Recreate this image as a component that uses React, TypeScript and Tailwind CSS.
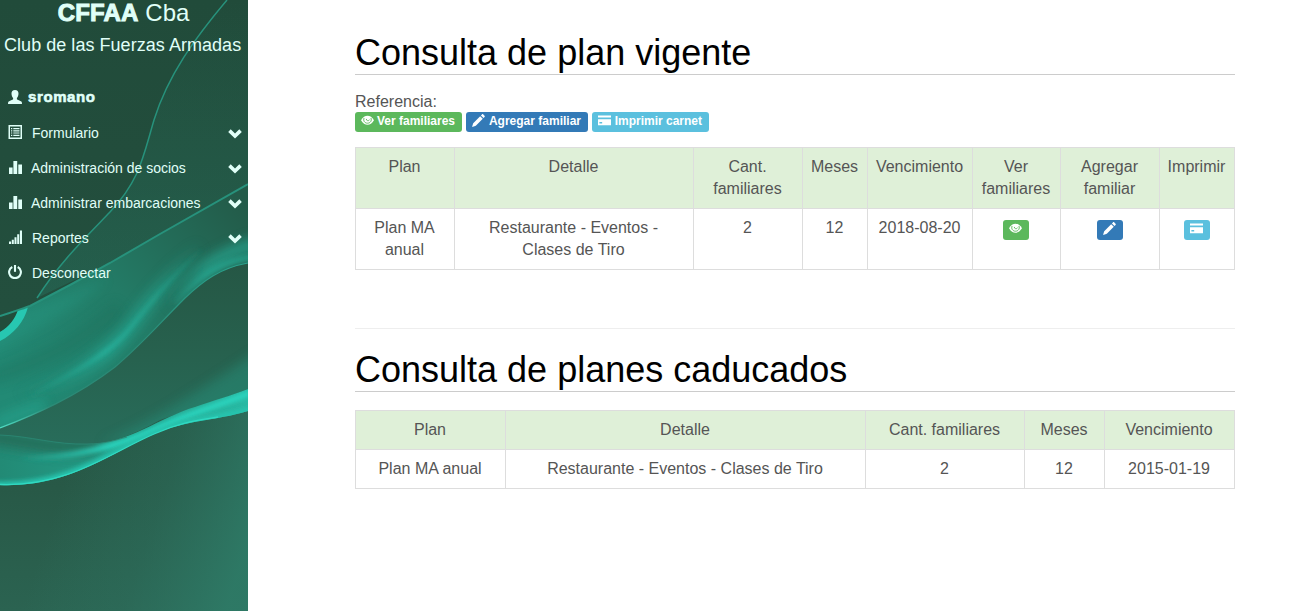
import type { ReactNode } from "react";

type IconName = "user" | "list" | "stats" | "signal" | "off" | "chevron" | "eye" | "pencil" | "card";

function Icon({ name, className }: { name: IconName; className: string }) {
  const shapes: Record<IconName, ReactNode> = {
    user: (
      <path d="M7 0C4.600 0 3.400 1.600 3.500 3.800c.1 1.900.7 3.300 1.600 4.200v1.300c-.3.700-3.400 1.500-4.500 2.300C.1 12.100 0 13 0 14h14c0-1-.1-1.900-.6-2.400-1.100-.8-4.200-1.600-4.500-2.300V8c.9-.9 1.500-2.300 1.600-4.200C10.600 1.600 9.400 0 7 0z" />
    ),
    list: (
      <path
        fillRule="evenodd"
        d="M.5 0h13.500v14H.5zM2 1.500v11h10.500v-11zM3 3h1.300v1.200H3zm2.300 0H11.500v1.200H5.300zM3 5.200h1.300v1.200H3zm2.300 0H11.500v1.200H5.300zM3 7.400h1.300v1.200H3zm2.300 0H11.500v1.200H5.300zM3 9.800h1.300v1.200H3zm2.300 0H11.500v1.200H5.300z"
      />
    ),
    stats: <path d="M1 7.500h3.600V14H1zM5.400 1h3.800v13H5.400zM10.300 4.500H14V14h-3.700z" />,
    signal: <path d="M1 11.500h2.100V14H1zM3.800 9.700h2V14h-2zM6.500 7.300h2V14h-2zM9.200 4.300h2V14h-2zM11.900.5H14V14h-2.100z" />,
    off: (
      <g fill="none" stroke="currentColor" strokeWidth="2.100">
        <path d="M4.300 2a5.900 5.900 0 1 0 5.400 0" />
        <path d="M7 0v6.800" />
      </g>
    ),
    chevron: <path d="M.2 5.900 2.700 3.200 7 7.500l4.300-4.300 2.500 2.700L7 12.500z" />,
    eye: (
      <>
        <path d="M0 6.700C2 3.300 4.300 1.800 7 1.800s5 1.500 7 4.900c-2 3.300-4.300 4.800-7 4.800S2 10 0 6.700z" />
        <path
          d="M3.300 4.300C2.100 7.500 4.200 9.900 7 9.900s4.900-2.400 3.700-5.600M5.700 5.300c0 2.200 2.600 2.500 3.500.9"
          fill="none"
          className="stroke-[#5cb85c]"
          strokeWidth="1"
        />
      </>
    ),
    pencil: <path d="M0 14 1.300 9.900 8.800 2.400l2.800 2.800-7.500 7.500zM9.600 1.600l1.100-1.100c.5-.5 1-.5 1.500 0l1.300 1.300c.5.5.5 1 0 1.500l-1.100 1.100z" />,
    card: <path fillRule="evenodd" d="M0 1.500h14v2.400H0zM0 5.600h14V12H0zM1.500 8.600v1.500h3V8.600z" />,
  };
  return (
    <svg viewBox="0 0 14 14" fill="currentColor" className={className} aria-hidden="true">
      {shapes[name]}
    </svg>
  );
}

function Waves() {
  return (
    <svg viewBox="0 0 248 611" preserveAspectRatio="none" className="absolute inset-0 h-full w-full" aria-hidden="true">
      <defs>
        <linearGradient id="base" x1="0" y1="0" x2="0" y2="1">
          <stop offset="0" stopColor="#214b3a" />
          <stop offset=".5" stopColor="#234f3e" />
          <stop offset=".8" stopColor="#285947" />
          <stop offset="1" stopColor="#2b6351" />
        </linearGradient>
        <linearGradient id="glow" gradientUnits="userSpaceOnUse" x1="80" y1="430" x2="265" y2="490">
          <stop offset="0" stopColor="#2d7c68" stopOpacity="0" />
          <stop offset=".5" stopColor="#2d7563" stopOpacity=".35" />
          <stop offset="1" stopColor="#2e7b67" stopOpacity=".9" />
        </linearGradient>
        <linearGradient id="veil" x1="0" y1="0" x2="0" y2="1">
          <stop offset="0" stopColor="#267762" stopOpacity="0" />
          <stop offset="1" stopColor="#26705d" stopOpacity=".8" />
        </linearGradient>
        <linearGradient id="ribbon" gradientUnits="userSpaceOnUse" x1="10" y1="400" x2="240" y2="200">
          <stop offset="0" stopColor="#228a75" />
          <stop offset=".5" stopColor="#237b66" />
          <stop offset="1" stopColor="#235b49" />
        </linearGradient>
        <linearGradient id="middle" x1="0" y1="0" x2="0" y2="1">
          <stop offset="0" stopColor="#255644" />
          <stop offset=".5" stopColor="#27614e" />
          <stop offset="1" stopColor="#286d5b" />
        </linearGradient>
        <linearGradient id="lower" x1="0" y1="0" x2="1" y2="0">
          <stop offset="0" stopColor="#228a75" />
          <stop offset=".45" stopColor="#249d87" />
          <stop offset="1" stopColor="#28b9a3" />
        </linearGradient>
        <linearGradient id="crest" gradientUnits="userSpaceOnUse" x1="20" y1="0" x2="248" y2="0">
          <stop offset="0" stopColor="#2bd4be" stopOpacity="0" />
          <stop offset=".4" stopColor="#2bd4be" />
          <stop offset="1" stopColor="#2bd4be" />
        </linearGradient>
        <linearGradient id="fadeRight" gradientUnits="userSpaceOnUse" x1="20" y1="400" x2="205" y2="245">
          <stop offset="0" stopColor="#24a58f" stopOpacity="0" />
          <stop offset=".4" stopColor="#28b7a2" />
          <stop offset=".7" stopColor="#25a58f" />
          <stop offset="1" stopColor="#25a58f" stopOpacity="0" />
        </linearGradient>
        <linearGradient id="shoulder" gradientUnits="userSpaceOnUse" x1="165" y1="0" x2="248" y2="0">
          <stop offset="0" stopColor="#27ad97" stopOpacity="0" />
          <stop offset=".5" stopColor="#27ad97" />
          <stop offset="1" stopColor="#27ad97" />
        </linearGradient>
        <linearGradient id="edge" gradientUnits="userSpaceOnUse" x1="0" y1="0" x2="248" y2="0">
          <stop offset="0" stopColor="#50ddc5" />
          <stop offset=".2" stopColor="#2b8b77" />
          <stop offset=".5" stopColor="#2a8975" />
          <stop offset="1" stopColor="#29a58f" />
        </linearGradient>
        <filter id="blur2" filterUnits="userSpaceOnUse" x="-40" y="150" width="340" height="400">
          <feGaussianBlur stdDeviation="2" />
        </filter>
        <filter id="blur6" filterUnits="userSpaceOnUse" x="-40" y="150" width="340" height="400">
          <feGaussianBlur stdDeviation="6" />
        </filter>
        <clipPath id="ribbonClip">
          <path d="M0 316C10 313 21 309 30 306L70 285L110 263L160 234L248 184V263C220 268 203 281 185 298C158 325 142 344 115 367C76 397 34 415 0 428z" />
        </clipPath>
        <clipPath id="middleClip">
          <path d="M0 428C34 415 76 397 115 367C142 344 158 325 185 298C203 281 220 268 248 263V389C215 402 195 407 160 420C129 437 110 444 87 444C56 445 30 436 0 435z" />
        </clipPath>
        <clipPath id="lowerClip">
          <path d="M0 435C30 436 56 445 87 444C129 444 160 417 195 407C215 400 230 396 248 389V411C215 421 185 420 154 434C110 453 68 488 0 485z" />
        </clipPath>
      </defs>
      <rect width="248" height="611" fill="url(#base)" />
      <rect y="410" width="248" height="201" fill="url(#glow)" />
      <path d="M227 0C195 38 168 75 154 120C143 157 140 180 110 212C85 238 60 262 37 298L110 263L248 184V0z" fill="url(#veil)" opacity=".6" />
      <g clipPath="url(#middleClip)">
        <rect y="255" width="248" height="195" fill="url(#middle)" />
        <path d="M100 443C145 425 190 397 260 350V400L160 440z" fill="#28947f" opacity=".45" filter="url(#blur6)" />
      </g>
      <g clipPath="url(#ribbonClip)">
        <rect y="180" width="248" height="250" fill="url(#ribbon)" />
        <path d="M-10 353C30 334 78 310 108 278L30 306L-10 320z" fill="#2bae98" opacity=".22" filter="url(#blur6)" />
        <path d="M-10 378C45 360 80 342 120 308" fill="none" stroke="#1f6d59" strokeWidth="16" opacity=".35" filter="url(#blur6)" />
        <path d="M0 402C68 387 109 355 132 325C151 299 168 277 205 242" fill="none" stroke="url(#fadeRight)" strokeWidth="14" opacity=".6" filter="url(#blur6)" />
        <path d="M30 396C82 369 114 350 131 327C151 302 168 280 202 249" fill="none" stroke="url(#fadeRight)" strokeWidth="3.500" opacity=".85" filter="url(#blur2)" />
        <path d="M165 307C190 280 211 255 260 243" fill="none" stroke="url(#shoulder)" strokeWidth="14" opacity=".7" filter="url(#blur6)" />
        <path d="M175 303C203 273 220 262 255 257" fill="none" stroke="url(#shoulder)" strokeWidth="7" opacity=".6" filter="url(#blur2)" />
        <path d="M-5 424L45 404" stroke="#26a892" strokeWidth="12" opacity=".6" filter="url(#blur6)" />
      </g>
      <path d="M0 316L18 310C16 318 10 326 0 332z" fill="#224d3b" />
      <path d="M18 310L28 307C24 322 14 334 0 341V332C9 327 15 319 18 310z" fill="#27c7b1" />
      <path d="M0 428C34 415 76 397 115 367C142 344 158 325 185 298C203 281 220 268 248 263" fill="none" stroke="url(#edge)" strokeWidth="1.200" />
      <g clipPath="url(#lowerClip)">
        <rect y="380" width="248" height="110" fill="url(#lower)" />
        <path d="M-10 436C40 445 70 450 100 445" fill="none" stroke="#266a57" strokeWidth="16" opacity=".9" filter="url(#blur6)" />
        <path d="M20 458C80 458 125 444 160 427C190 413 218 406 250 393" fill="none" stroke="url(#crest)" strokeWidth="6" filter="url(#blur2)" />
        <path d="M-5 485C68 488 110 453 154 434C185 420 205 421 250 411" fill="none" stroke="#28c5af" strokeWidth="7" filter="url(#blur2)" />
      </g>
      <path d="M0 435C30 436 56 445 87 444C105 444 116 440 127 437" fill="none" stroke="#2b8975" strokeWidth=".8" />
      <path d="M0 484.500C68 487 110 453 154 434C180 422 200 420 218 417" fill="none" stroke="#31d9c1" strokeWidth="1.300" />
      <g fill="none" stroke="#27927c">
        <path d="M227 0C195 38 168 75 154 120C143 157 140 180 110 212C85 238 60 262 37 298" strokeWidth="1.500" />
        <path d="M0 316C10 313 21 309 30 306L70 285L110 263L160 234L248 184" strokeWidth="2" />
      </g>
    </svg>
  );
}

const menu: { icon: IconName; label: string; sub: boolean; indent: string }[] = [
  { icon: "list", label: "Formulario", sub: true, indent: "ml-2.5" },
  { icon: "stats", label: "Administración de socios", sub: true, indent: "ml-[9px]" },
  { icon: "stats", label: "Administrar embarcaciones", sub: true, indent: "ml-[9px]" },
  { icon: "signal", label: "Reportes", sub: true, indent: "ml-2.5" },
  { icon: "off", label: "Desconectar", sub: false, indent: "ml-2.5" },
];

function Sidebar() {
  return (
    <aside className="relative w-[248px] shrink-0 overflow-hidden bg-[#234b3a] text-[#e0fff8]">
      <Waves />
      <div className="relative">
        <div className="flex h-[26px] items-center justify-center whitespace-pre pr-px text-2xl leading-7">
          <span className="font-bold tracking-[0.2px] [-webkit-text-stroke:1px_#e0fff8]">CFFAA</span>
          <span> Cba</span>
        </div>
        <div className="mt-[9px] h-5 whitespace-nowrap pl-1 text-lg leading-5 tracking-[0.04px]">Club de las Fuerzas Armadas</div>
        <nav className="mt-[25px]">
          <div className="flex h-[35px] items-center pl-2">
            <Icon name="user" className="-mt-0.5 size-3.5" />
            <span className="ml-1.5 text-[15px] font-bold tracking-[0.6px] [-webkit-text-stroke:0.6px_#e0fff8]">sromano</span>
          </div>
          {menu.map((item) => (
            <div key={item.label} className="flex h-[35px] items-center pl-2 pr-1.5 text-sm">
              <Icon name={item.icon} className="-mt-0.5 size-3.5" />
              <span className={item.indent}>{item.label}</span>
              {item.sub && <Icon name="chevron" className="ml-auto size-3.5" />}
            </div>
          ))}
        </nav>
      </div>
    </aside>
  );
}

function Badge({ icon, color, label }: { icon: IconName; color: string; label?: string }) {
  return (
    <span className={`inline-flex h-5 items-center justify-between rounded-[3px] pl-1.5 pr-[7px] text-xs font-bold leading-none text-white ${color}`}>
      <Icon name={icon} className="-mt-[3px] h-[13px] w-[13px]" />
      {label && <span className="-mt-[2px]">{label}</span>}
    </span>
  );
}

function Table({ widths, head, row }: { widths: string[]; head: string[]; row: ReactNode[] }) {
  return (
    <table className="w-[879px] table-fixed border-collapse text-center text-base leading-[22px] text-[#555]">
      <colgroup>
        {widths.map((w, i) => (
          <col key={i} className={w} />
        ))}
      </colgroup>
      <thead>
        <tr className="bg-[#dff0d8]">
          {head.map((h) => (
            <th key={h} className="border border-[#ddd] py-2 pl-[7px] pr-2 align-top font-normal">
              {h}
            </th>
          ))}
        </tr>
      </thead>
      <tbody>
        <tr>
          {row.map((c, i) => (
            <td key={i} className="border border-[#ddd] py-2 pl-[7px] pr-2 align-top">
              {c}
            </td>
          ))}
        </tr>
      </tbody>
    </table>
  );
}

function Title({ children }: { children: ReactNode }) {
  return <h1 className="h-[43px] whitespace-nowrap border-b border-[#ccc] text-4xl leading-[42px] text-black">{children}</h1>;
}

export default function App() {
  return (
    <div className="flex h-[611px] w-[1307px] overflow-hidden bg-white font-['Liberation_Sans',Arial,sans-serif]">
      <Sidebar />
      <main className="ml-[107px] w-[880px] pt-8">
        <Title>Consulta de plan vigente</Title>
        <div className="mt-4 h-[21px] text-base leading-[21px] text-[#555]">Referencia:</div>
        <div className="flex gap-1">
          <Badge icon="eye" color="w-[107px] bg-[#5cb85c]" label="Ver familiares" />
          <Badge icon="pencil" color="w-[122px] bg-[#337ab7]" label="Agregar familiar" />
          <Badge icon="card" color="w-[117px] bg-[#5bc0de]" label="Imprimir carnet" />
        </div>
        <div className="mt-[15px]">
          <Table
            widths={["w-[99px]", "w-[239px]", "w-[109px]", "w-[65px]", "w-[105px]", "w-[88px]", "w-[99px]", "w-[75px]"]}
            head={["Plan", "Detalle", "Cant. familiares", "Meses", "Vencimiento", "Ver familiares", "Agregar familiar", "Imprimir"]}
            row={[
              "Plan MA anual",
              "Restaurante - Eventos - Clases\u00a0de Tiro",
              "2",
              "12",
              "2018-08-20",
              <div className="mt-[3px] flex justify-center"><Badge icon="eye" color="bg-[#5cb85c]" /></div>,
              <div className="mt-[3px] flex justify-center"><Badge icon="pencil" color="bg-[#337ab7]" /></div>,
              <div className="mt-[3px] flex justify-center"><Badge icon="card" color="bg-[#5bc0de]" /></div>,
            ]}
          />
        </div>
        <hr className="mb-5 mt-[58px] border-[#eee]" />
        <Title>Consulta de planes caducados</Title>
        <div className="mt-[18px]">
          <Table
            widths={["w-[150px]", "w-[360px]", "w-[159px]", "w-[80px]", "w-[130px]"]}
            head={["Plan", "Detalle", "Cant. familiares", "Meses", "Vencimiento"]}
            row={["Plan MA anual", "Restaurante - Eventos - Clases de Tiro", "2", "12", "2015-01-19"]}
          />
        </div>
      </main>
    </div>
  );
}
